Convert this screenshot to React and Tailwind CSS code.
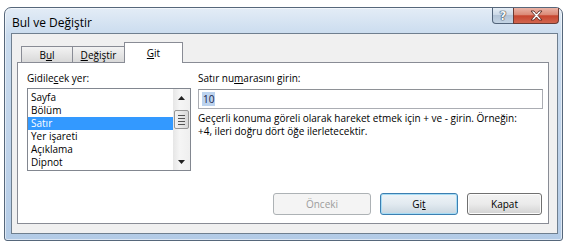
import React from 'react';

const Tab = ({ children, active, className = '' }) =>
  active ? (
    <div className={`relative z-10 -mb-px flex h-[21px] items-start justify-center border border-b-0 border-[#898c95] bg-white pt-[4px] ${className}`}>
      {children}
    </div>
  ) : (
    <div className={`flex h-[16px] items-center justify-center border border-b-0 border-[#898c95] bg-gradient-to-b from-[#f3f3f3] to-[#d9d9d9] pt-px ${className}`}>
      {children}
    </div>
  );

const Button = ({ children, kind, className = '' }) => {
  const styles = {
    disabled: 'border-[#adb2b5] bg-[#f4f4f4] text-[#9c9c9c]',
    primary:
      'border-[#3c7fb1] bg-gradient-to-b from-[#eef4f8] via-[#e2eaf0] to-[#c9d6e0] shadow-[inset_0_0_0_1px_#a6dcf5] text-black',
    normal:
      'border-[#707070] bg-gradient-to-b from-[#f2f2f2] via-[#ebebeb] to-[#d2d2d2] shadow-[inset_0_0_0_1px_#fcfcfc] text-black',
  };
  return (
    <div className={`flex h-[22px] items-center justify-center rounded-[3px] border ${styles[kind]} ${className}`}>
      {children}
    </div>
  );
};

const items = ['Sayfa', 'Bölüm', 'Satır', 'Yer işareti', 'Açıklama', 'Dipnot'];

const App = () => {
  return (
    <div className="h-[246px] w-[568px] overflow-hidden bg-white pt-[7px] pl-[4px] font-['Open_Sans','Noto_Sans',Arial,sans-serif] text-[10px] leading-[12px] text-black">
      {/* window frame */}
      <div className="flex h-[234px] w-[559px] flex-col rounded-t-[7px] rounded-b-[3px] border border-[#56677b] bg-[linear-gradient(180deg,#e3ecf6_0%,#c9dbee_12%,#bfd3ea_60%,#b3cbe6_100%)] shadow-[inset_0_0_0_1px_rgba(255,255,255,0.55)]">
        {/* title bar */}
        <div className="flex h-[25px] items-start">
          <div className="pt-[7px] pl-[7px] text-[12px] leading-[16px]">Bul ve Değiştir</div>
          <div className="ml-auto mr-[3px] flex">
            <div className="flex h-[16px] w-[22px] items-center justify-center rounded-bl-[4px] border border-t-0 border-[#52647a] bg-[linear-gradient(180deg,#e6eef6_0%,#ccd9e7_45%,#b3c4d7_50%,#c4d4e4_100%)]">
              <span className="font-['DejaVu_Sans',sans-serif] text-[12px] font-bold leading-[12px] text-[#f4f6f8] [text-shadow:0_0_1px_#2c3a4a,0_0_1px_#2c3a4a,0_0_1px_#2c3a4a]">
                ?
              </span>
            </div>
            <div className="-ml-px flex h-[16px] w-[46px] items-center justify-center rounded-br-[4px] border border-t-0 border-[#6b3b34] bg-[linear-gradient(180deg,#eab3a6_0%,#db8a77_45%,#c7452f_52%,#d1654e_100%)]">
              <svg width="13" height="11" viewBox="0 0 13 11">
                <path
                  d="M1 1h3l2.5 3L9 1h3L8 5.5 12 10H9L6.5 7 4 10H1l4-4.5z"
                  fill="#ffffff"
                  stroke="#5a2b24"
                  strokeWidth="0.9"
                  strokeLinejoin="round"
                />
              </svg>
            </div>
          </div>
        </div>

        {/* client area */}
        <div className="ml-[6px] flex h-[201px] w-[547px] flex-col border border-[#6f7f8f] bg-[#f0f0f0] pt-[8px] pl-[5px] pr-[8px] pb-[9px]">
          <div className="ml-[4px] flex h-[20px] items-end">
            <Tab className="w-[52px]">
              B<span className="underline underline-offset-1">u</span>l
            </Tab>
            <Tab className="-ml-px w-[53px]">
              <span className="underline underline-offset-1">D</span>eğiştir
            </Tab>
            <Tab active className="-ml-px w-[59px]">
              <span className="underline underline-offset-1">G</span>it
            </Tab>
          </div>

          <div className="flex h-[162px] flex-col border border-[#898c95] bg-white pt-[9px] pl-[9px] pr-[5px] pb-[8px]">
            <div className="flex gap-[7px]">
              {/* left column */}
              <div className="flex w-[164px] flex-col">
                <div className="h-[12px]">
                  Gidile<span className="underline underline-offset-1">c</span>ek yer:
                </div>
                <div className="mt-[4px] flex h-[83px] border border-[#828790] bg-white">
                  <div className="flex flex-1 flex-col pt-[2px]">
                    {items.map((item) => (
                      <div
                        key={item}
                        className={`h-[13px] pl-[3px] leading-[13px] ${item === 'Satır' ? 'bg-[#3399ff] text-white' : ''}`}
                      >
                        {item}
                      </div>
                    ))}
                  </div>
                  <div className="flex w-[17px] flex-col bg-[linear-gradient(90deg,#e6e6e6,#f5f5f5_40%,#efefef)]">
                    <div className="flex h-[17px] items-center justify-center">
                      <svg width="7" height="4" viewBox="0 0 7 4">
                        <path d="M0 4L3.5 0 7 4z" fill="#222" />
                      </svg>
                    </div>
                    <div className="mx-[1px] mt-[4px] flex h-[19px] flex-col items-center justify-center gap-[2px] rounded-[2px] border border-[#959595] bg-[linear-gradient(90deg,#f3f3f3,#e6e6e6_50%,#d8d8d8)]">
                      <div className="h-px w-[7px] bg-[#555]" />
                      <div className="h-px w-[7px] bg-[#555]" />
                      <div className="h-px w-[7px] bg-[#555]" />
                      <div className="h-px w-[7px] bg-[#555]" />
                    </div>
                    <div className="flex-1" />
                    <div className="flex h-[17px] items-center justify-center">
                      <svg width="7" height="4" viewBox="0 0 7 4">
                        <path d="M0 0L3.5 4 7 0z" fill="#222" />
                      </svg>
                    </div>
                  </div>
                </div>
              </div>

              {/* right column */}
              <div className="flex w-[345px] flex-col">
                <div className="h-[12px]">
                  Satır nu<span className="underline underline-offset-1">m</span>arasını girin:
                </div>
                <div className="mt-[5px] flex h-[20px] items-center border border-[#abadb3] border-t-[#8e9196] bg-white pl-[3px]">
                  <span className="bg-[#bcd3ee] px-px leading-[14px] text-[#14224a]">10</span>
                </div>
                <div className="mt-[3px] leading-[13px]">
                  <div className="whitespace-nowrap">
                    Geçerli konuma göreli olarak hareket etmek için + ve - girin. Örneğin:
                  </div>
                  <div className="whitespace-nowrap">+4, ileri doğru dört öğe ilerletecektir.</div>
                </div>
              </div>
            </div>

            <div className="mt-auto mr-px flex justify-end gap-[9px]">
              <Button kind="disabled" className="w-[98px]">
                Önceki
              </Button>
              <Button kind="primary" className="w-[78px]">
                Gi<span className="underline underline-offset-1">t</span>
              </Button>
              <Button kind="normal" className="w-[75px]">
                Kapat
              </Button>
            </div>
          </div>
        </div>
      </div>
    </div>
  );
};

export default App;
